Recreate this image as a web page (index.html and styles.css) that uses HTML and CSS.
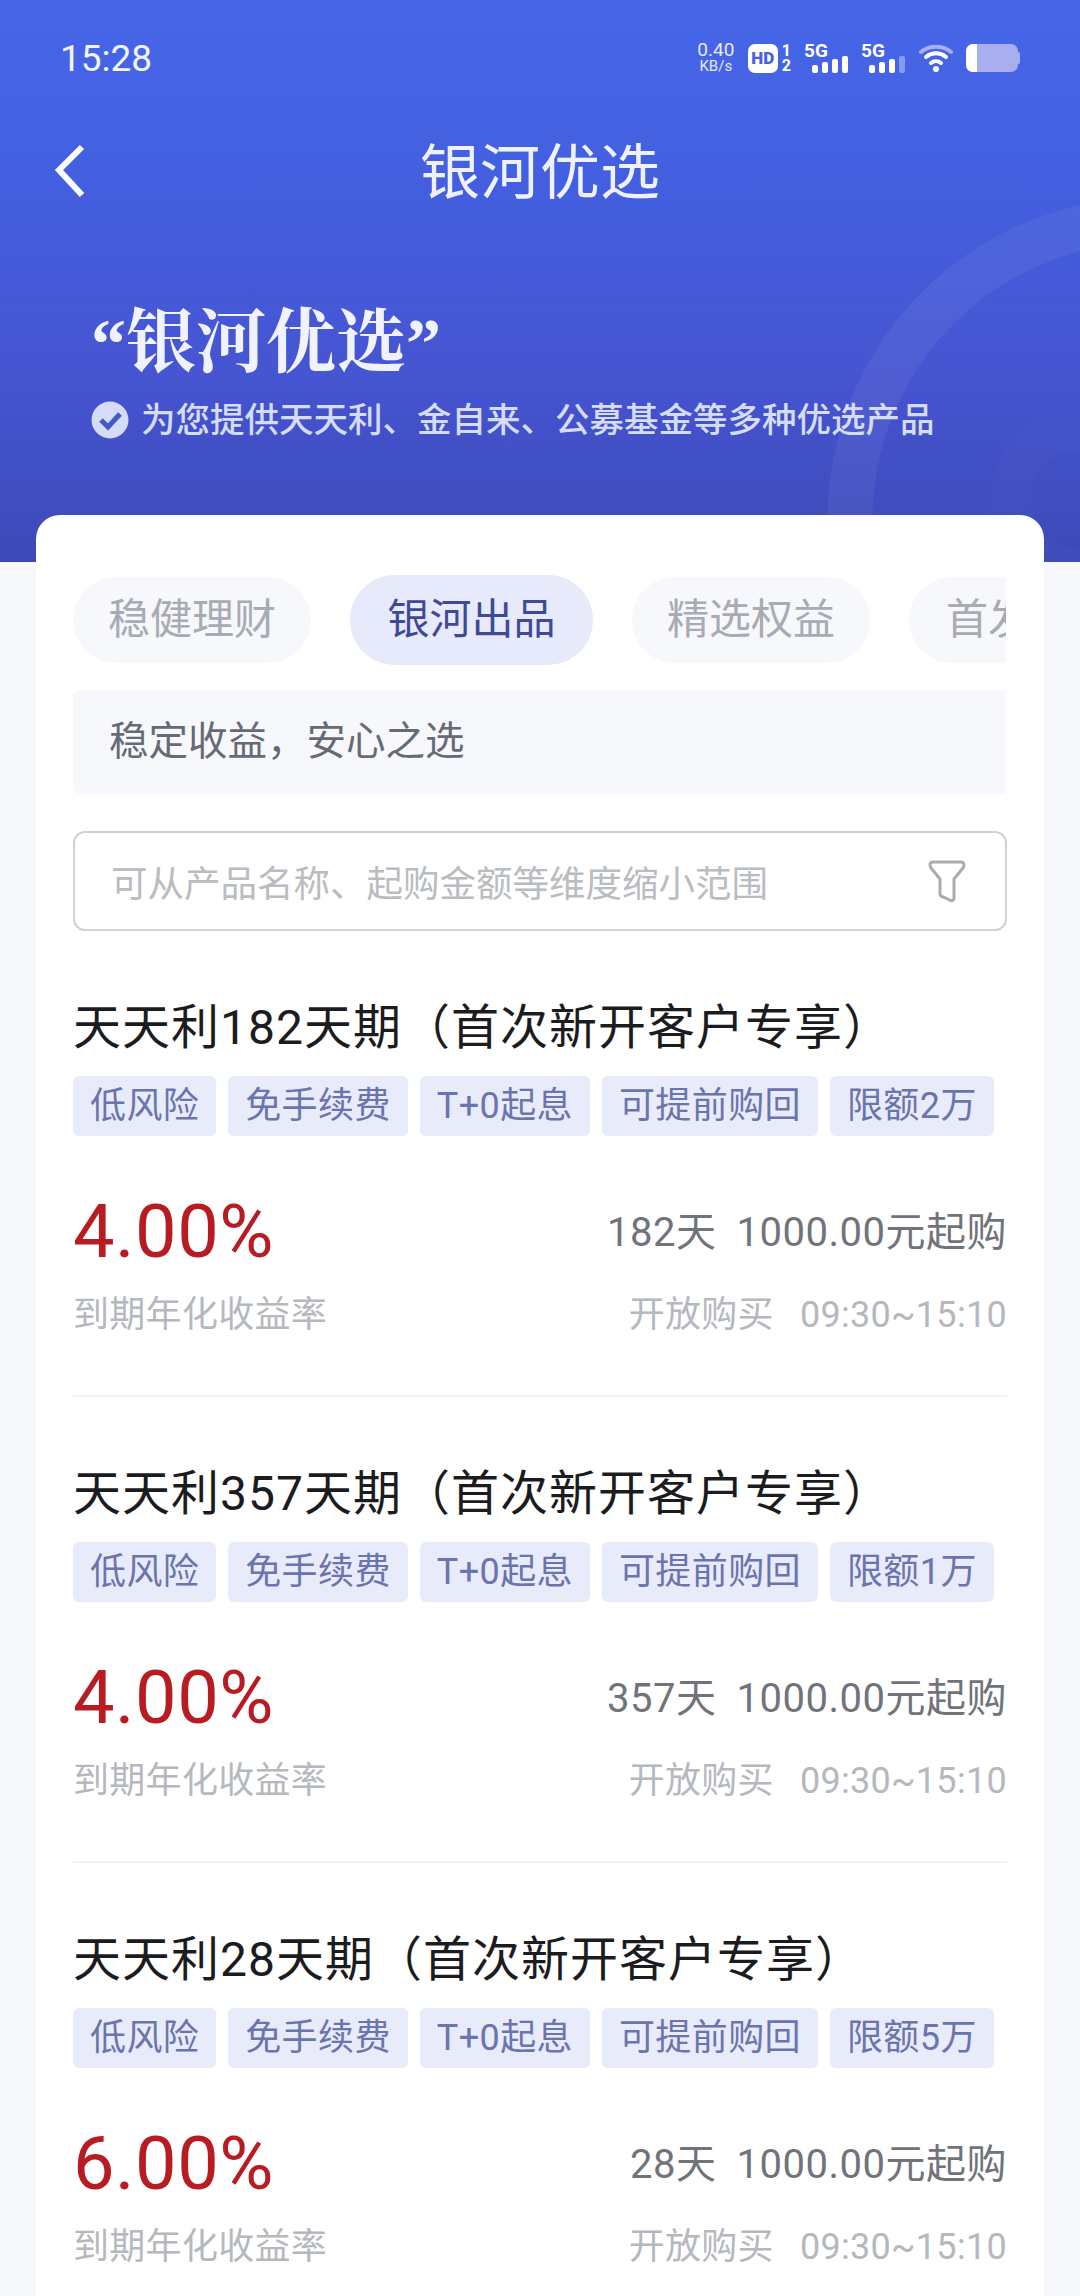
FILE: index.html
```html
<!DOCTYPE html>
<html lang="zh-CN">
<head>
    <meta charset="UTF-8">
    <meta name="viewport" content="width=device-width, initial-scale=1.0">
    <title>银河优选</title>
    <link rel="stylesheet" href="styles.css">
</head>
<body>
    <header class="topo">
        <svg class="topo-arcos" width="300" height="362" viewBox="0 0 300 362" fill="none">
            <circle cx="370" cy="320" r="300" stroke="#fff" stroke-opacity="0.055" stroke-width="45"/>
            <circle cx="300" cy="300" r="70" stroke="#fff" stroke-opacity="0.015" stroke-width="40"/>
        </svg>

        <div class="status">
            <span class="status-hora">15:28</span>
            <div class="status-icones">
                <div class="status-rede"><span>0.40</span><span class="status-rede-un">KB/s</span></div>
                <span class="status-hd">HD</span>
                <div class="status-sim"><span>1</span><span>2</span></div>
                <div class="sinal">
                    <span class="sinal-nome">5G</span>
                    <svg width="36" height="17" viewBox="0 0 36 17" fill="#fff">
                        <rect x="0" y="9" width="6" height="8" rx="2"/>
                        <rect x="10" y="6" width="6" height="11" rx="2"/>
                        <rect x="20" y="3" width="6" height="14" rx="2"/>
                        <rect x="30" y="0" width="6" height="17" rx="2"/>
                    </svg>
                </div>
                <div class="sinal">
                    <span class="sinal-nome">5G</span>
                    <svg width="36" height="17" viewBox="0 0 36 17" fill="#fff">
                        <rect x="0" y="9" width="6" height="8" rx="2"/>
                        <rect x="10" y="6" width="6" height="11" rx="2"/>
                        <rect x="20" y="3" width="6" height="14" rx="2"/>
                        <rect x="30" y="0" width="6" height="17" rx="2" fill-opacity="0.35"/>
                    </svg>
                </div>
                <svg class="wifi" width="36" height="28" viewBox="0 0 36 28" fill="none" stroke-linecap="round">
                    <path d="M3 8C11 1 25 1 33 8" stroke="#a8aef0" stroke-width="4"/>
                    <path d="M8 13c6-5 14-5 20 0" stroke="#fff" stroke-width="4"/>
                    <path d="M13 19c3-2.500 7-2.500 10 0" stroke="#fff" stroke-width="4"/>
                    <circle cx="18" cy="25" r="3" fill="#fff"/>
                </svg>
                <div class="bateria"><span class="bateria-nivel"></span></div>
                <span class="bateria-ponta"></span>
            </div>
        </div>

        <nav class="nav">
            <svg class="nav-voltar" width="32" height="54" viewBox="0 0 32 54" fill="none">
                <path d="M28 3L5 26l23 25" stroke="#fff" stroke-width="6"/>
            </svg>
            <h1 class="nav-titulo">银河优选</h1>
        </nav>

        <div class="destaque">
            <h2 class="destaque-titulo"><span class="aspas">“</span>银河优选<span class="aspas">”</span></h2>
            <p class="destaque-sub">
                <svg width="38" height="38" viewBox="0 0 38 38">
                    <circle cx="19" cy="19" r="18.500" fill="#d5dcf8"/>
                    <path d="M10 19l7 7 12-13" fill="none" stroke="#4259c9" stroke-width="5"/>
                </svg>
                为您提供天天利、金自来、公募基金等多种优选产品
            </p>
        </div>
    </header>

    <main class="cartao">
        <div class="abas">
            <span class="aba">稳健理财</span>
            <span class="aba aba-ativa">银河出品</span>
            <span class="aba">精选权益</span>
            <span class="aba">首发基金</span>
        </div>

        <div class="aviso">稳定收益，安心之选</div>

        <div class="busca">
            <span>可从产品名称、起购金额等维度缩小范围</span>
            <svg width="40" height="44" viewBox="0 0 40 44" fill="none">
                <path d="M6 3h28c3 0 4 3 2 6L27 20v19c0 2-1 3-3 2.500L16 38c-2-.5-3-1.500-3-3V20L4 9C2 6 3 3 6 3z" stroke="#a9acaf" stroke-width="3"/>
            </svg>
        </div>

        <article class="produto">
            <h3 class="produto-nome">天天利182天期（首次新开客户专享）</h3>
            <div class="tags">
                <span class="tag">低风险</span>
                <span class="tag">免手续费</span>
                <span class="tag">T+0起息</span>
                <span class="tag">可提前购回</span>
                <span class="tag">限额2万</span>
            </div>
            <div class="produto-linha">
                <span class="taxa">4.00%</span>
                <span class="prazo">182天<span class="prazo-valor">1000.00元起购</span></span>
            </div>
            <div class="produto-linha produto-linha-sub">
                <span class="legenda">到期年化收益率</span>
                <span class="legenda">开放购买<span class="legenda-hora">09:30~15:10</span></span>
            </div>
        </article>

        <article class="produto">
            <h3 class="produto-nome">天天利357天期（首次新开客户专享）</h3>
            <div class="tags">
                <span class="tag">低风险</span>
                <span class="tag">免手续费</span>
                <span class="tag">T+0起息</span>
                <span class="tag">可提前购回</span>
                <span class="tag">限额1万</span>
            </div>
            <div class="produto-linha">
                <span class="taxa">4.00%</span>
                <span class="prazo">357天<span class="prazo-valor">1000.00元起购</span></span>
            </div>
            <div class="produto-linha produto-linha-sub">
                <span class="legenda">到期年化收益率</span>
                <span class="legenda">开放购买<span class="legenda-hora">09:30~15:10</span></span>
            </div>
        </article>

        <article class="produto">
            <h3 class="produto-nome">天天利28天期（首次新开客户专享）</h3>
            <div class="tags">
                <span class="tag">低风险</span>
                <span class="tag">免手续费</span>
                <span class="tag">T+0起息</span>
                <span class="tag">可提前购回</span>
                <span class="tag">限额5万</span>
            </div>
            <div class="produto-linha">
                <span class="taxa">6.00%</span>
                <span class="prazo">28天<span class="prazo-valor">1000.00元起购</span></span>
            </div>
            <div class="produto-linha produto-linha-sub">
                <span class="legenda">到期年化收益率</span>
                <span class="legenda">开放购买<span class="legenda-hora">09:30~15:10</span></span>
            </div>
        </article>
    </main>
</body>
</html>
```

FILE: styles.css
```css
* {
    box-sizing: border-box;
}
body {
    font-family: Roboto, 'Noto Sans CJK SC', sans-serif;
    margin: 0;
    width: 1080px;
    height: 2296px;
    overflow: hidden;
    background-color: #f6f8fc;
}
h1, h2, h3, p {
    margin: 0;
    font-weight: 400;
}

/* topo azul */
.topo {
    position: relative;
    height: 562px;
    padding-top: 37px;
    overflow: hidden;
    background: linear-gradient(180deg, #4766e8 0%, #4360e0 30%, #4655d2 65%, #3c4ab8 100%);
}
.topo-arcos {
    position: absolute;
    right: 0;
    top: 200px;
}
.status {
    position: relative;
    display: flex;
    justify-content: space-between;
    align-items: center;
    height: 42px;
    padding: 0 60px;
    color: #fff;
}
.status-hora {
    font-size: 37px;
    color: #f2f4ff;
}
.status-icones {
    display: flex;
    align-items: center;
}
.status-rede {
    display: flex;
    flex-direction: column;
    align-items: center;
    font-size: 19px;
    line-height: 16px;
    width: 40px;
    margin-left: -6px;
    color: #e6eaff;
}
.status-rede-un {
    font-size: 15px;
}
.status-hd {
    width: 30px;
    height: 29px;
    margin-left: 12px;
    border-radius: 7px;
    background-color: #fff;
    color: #4560e0;
    font-size: 17px;
    font-weight: 900;
    line-height: 29px;
    text-align: center;
}
.status-sim {
    display: flex;
    flex-direction: column;
    margin-left: 4px;
    font-size: 16px;
    font-weight: 700;
    line-height: 15px;
}
.sinal {
    display: flex;
    flex-direction: column;
    width: 44px;
    height: 30px;
    margin-left: 13px;
}
.sinal svg {
    align-self: flex-end;
    margin-top: -3px;
}
.sinal-nome {
    font-size: 19px;
    font-weight: 700;
    line-height: 16px;
}
.wifi {
    margin-left: 13px;
}
.bateria {
    width: 52px;
    height: 28px;
    margin-left: 12px;
    border-radius: 7px;
    overflow: hidden;
    background-color: #a8aef0;
}
.bateria-nivel {
    display: block;
    width: 11px;
    height: 100%;
    background-color: #fff;
}
.bateria-ponta {
    width: 2px;
    height: 12px;
    border-radius: 0 2px 2px 0;
    background-color: #a8aef0;
}
.nav {
    position: relative;
    display: flex;
    justify-content: center;
    align-items: center;
    height: 84px;
    margin-top: 53px;
}
.nav-voltar {
    position: absolute;
    left: 54px;
    top: 12px;
}
.nav-titulo {
    font-size: 60px;
    line-height: 84px;
    color: #eef1ff;
}
.destaque {
    position: relative;
    padding: 0 91px;
    margin-top: 76px;
}
.destaque-titulo {
    font-family: 'Noto Serif CJK SC', 'Liberation Serif', 'Noto Sans CJK SC', serif;
    font-size: 70px;
    font-weight: 700;
    line-height: 90px;
    color: #f0f3ff;
}
.aspas {
    font-family: 'Liberation Serif', serif;
}
.destaque-sub {
    display: flex;
    align-items: center;
    gap: 12px;
    margin-top: 8px;
    font-size: 34.500px;
    font-weight: 500;
    line-height: 46px;
    color: #d5dcf8;
}

/* cartao branco */
.cartao {
    position: relative;
    width: 1008px;
    height: 1781px;
    margin: -47px 36px 0;
    padding: 60px 37px 0;
    border-radius: 24px 24px 0 0;
    background-color: #fff;
}
.abas {
    display: flex;
    align-items: center;
    gap: 39px;
    width: 933px;
    height: 90px;
    overflow: hidden;
}
.aba {
    flex: none;
    width: 238px;
    height: 86px;
    border-radius: 43px;
    background-color: #f7f8fb;
    color: #a8abb3;
    font-size: 42px;
    line-height: 86px;
    text-align: center;
}
.aba-ativa {
    width: 243px;
    height: 90px;
    border-radius: 45px;
    background-color: #e6eafa;
    color: #3f4a97;
    line-height: 90px;
}
.aba:last-child {
    text-align: left;
    padding-left: 37px;
}
.aviso {
    width: 933px;
    height: 104px;
    margin-top: 25px;
    padding-left: 36px;
    background-color: #f7f8fc;
    border-radius: 8px 0 0 8px;
    color: #666a75;
    font-size: 39.500px;
    line-height: 104px;
}
.busca {
    display: flex;
    justify-content: space-between;
    align-items: center;
    width: 934px;
    height: 100px;
    margin-top: 37px;
    padding: 0 38px 0 36px;
    border: 2px solid #d2d2d2;
    border-radius: 12px;
    color: #b9bcc0;
    font-size: 36.500px;
}
.produto {
    width: 934px;
    height: 466px;
    padding-top: 65px;
    border-bottom: 2px solid #f1f2f4;
}
.produto:last-child {
    border-bottom: none;
}
.produto-nome {
    font-size: 48px;
    letter-spacing: 1px;
    line-height: 64px;
    color: #1c1c1e;
}
.tags {
    display: flex;
    gap: 12px;
    margin-top: 16px;
}
.tag {
    flex: none;
    height: 60px;
    padding: 0 17px;
    border-radius: 6px;
    background-color: #e8ebf9;
    color: #6a74ad;
    font-size: 36px;
    letter-spacing: 0.4px;
    line-height: 60px;
}
.produto-linha {
    display: flex;
    justify-content: space-between;
    align-items: center;
    height: 80px;
    margin-top: 56px;
}
.produto-linha-sub {
    height: 44px;
    margin-top: 17px;
}
.taxa {
    font-size: 74px;
    letter-spacing: 0.5px;
    line-height: 82px;
    color: #b81c22;
}
.prazo {
    margin-bottom: 6px;
    font-size: 40px;
    letter-spacing: 0.5px;
    color: #70747a;
}
.prazo-valor {
    margin-left: 20px;
}
.legenda {
    font-size: 36px;
    letter-spacing: 0.3px;
    color: #b5b8bc;
}
.legenda-hora {
    margin-left: 26px;
}
```
